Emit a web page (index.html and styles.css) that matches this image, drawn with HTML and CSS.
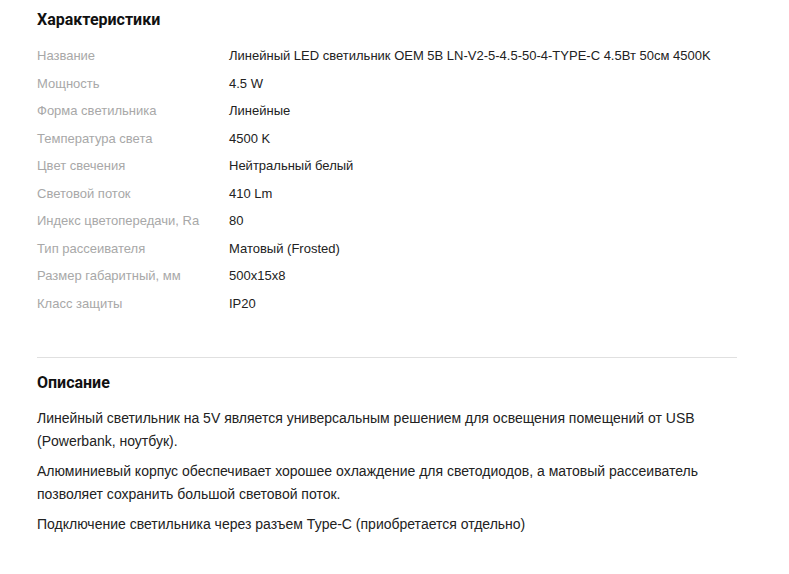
FILE: index.html
```html
<!DOCTYPE html>
<html lang="ru">
<head>
  <meta charset="UTF-8">
  <title>Характеристики</title>
  <link rel="stylesheet" href="styles.css">
</head>
<body>
  <div class="product-info">
    <section class="specs">
      <h2 class="section-title">Характеристики</h2>
      <div class="spec-row"><span class="spec-name">Название</span><span class="spec-value">Линейный LED светильник OEM 5B LN-V2-5-4.5-50-4-TYPE-C 4.5Вт 50см 4500K</span></div>
      <div class="spec-row"><span class="spec-name">Мощность</span><span class="spec-value">4.5 W</span></div>
      <div class="spec-row"><span class="spec-name">Форма светильника</span><span class="spec-value">Линейные</span></div>
      <div class="spec-row"><span class="spec-name">Температура света</span><span class="spec-value">4500 K</span></div>
      <div class="spec-row"><span class="spec-name">Цвет свечения</span><span class="spec-value">Нейтральный белый</span></div>
      <div class="spec-row"><span class="spec-name">Световой поток</span><span class="spec-value">410 Lm</span></div>
      <div class="spec-row"><span class="spec-name">Индекс цветопередачи, Ra</span><span class="spec-value">80</span></div>
      <div class="spec-row"><span class="spec-name">Тип рассеивателя</span><span class="spec-value">Матовый (Frosted)</span></div>
      <div class="spec-row"><span class="spec-name">Размер габаритный, мм</span><span class="spec-value">500x15x8</span></div>
      <div class="spec-row"><span class="spec-name">Класс защиты</span><span class="spec-value">IP20</span></div>
    </section>

    <section class="description">
      <h2 class="section-title">Описание</h2>
      <p>Линейный светильник на 5V является универсальным решением для освещения помещений от USB (Powerbank, ноутбук).</p>
      <p>Алюминиевый корпус обеспечивает хорошее охлаждение для светодиодов, а матовый рассеиватель позволяет сохранить большой световой поток.</p>
      <p>Подключение светильника через разъем Type-C (приобретается отдельно)</p>
    </section>
  </div>
</body>
</html>
```

FILE: styles.css
```css
* {
  margin: 0;
  padding: 0;
  box-sizing: border-box;
}

body {
  font-family: "Liberation Sans", Arial, sans-serif;
  font-size: 13px;
  color: #222;
  background: #fff;
}

.product-info {
  width: 700px;
  margin-left: 37px;
  padding-top: 10px;
}

.section-title {
  font-family: Roboto, Arial, sans-serif;
  font-size: 16px;
  font-weight: 700;
  color: #111;
  line-height: 20px;
}

.specs {
  padding-bottom: 35px;
  border-bottom: 1px solid #e0e0e0;
}

.specs .section-title {
  margin-bottom: 17px;
}

.spec-row {
  display: flex;
  height: 27.5px;
  line-height: 17px;
}

.spec-name {
  width: 192px;
  flex-shrink: 0;
  color: #a8a8a8;
}

.spec-value {
  color: #222;
}

.description {
  padding-top: 15px;
}

.description .section-title {
  margin-bottom: 14px;
}

.description p {
  font-size: 14px;
  line-height: 23px;
  margin-bottom: 7px;
}
```
